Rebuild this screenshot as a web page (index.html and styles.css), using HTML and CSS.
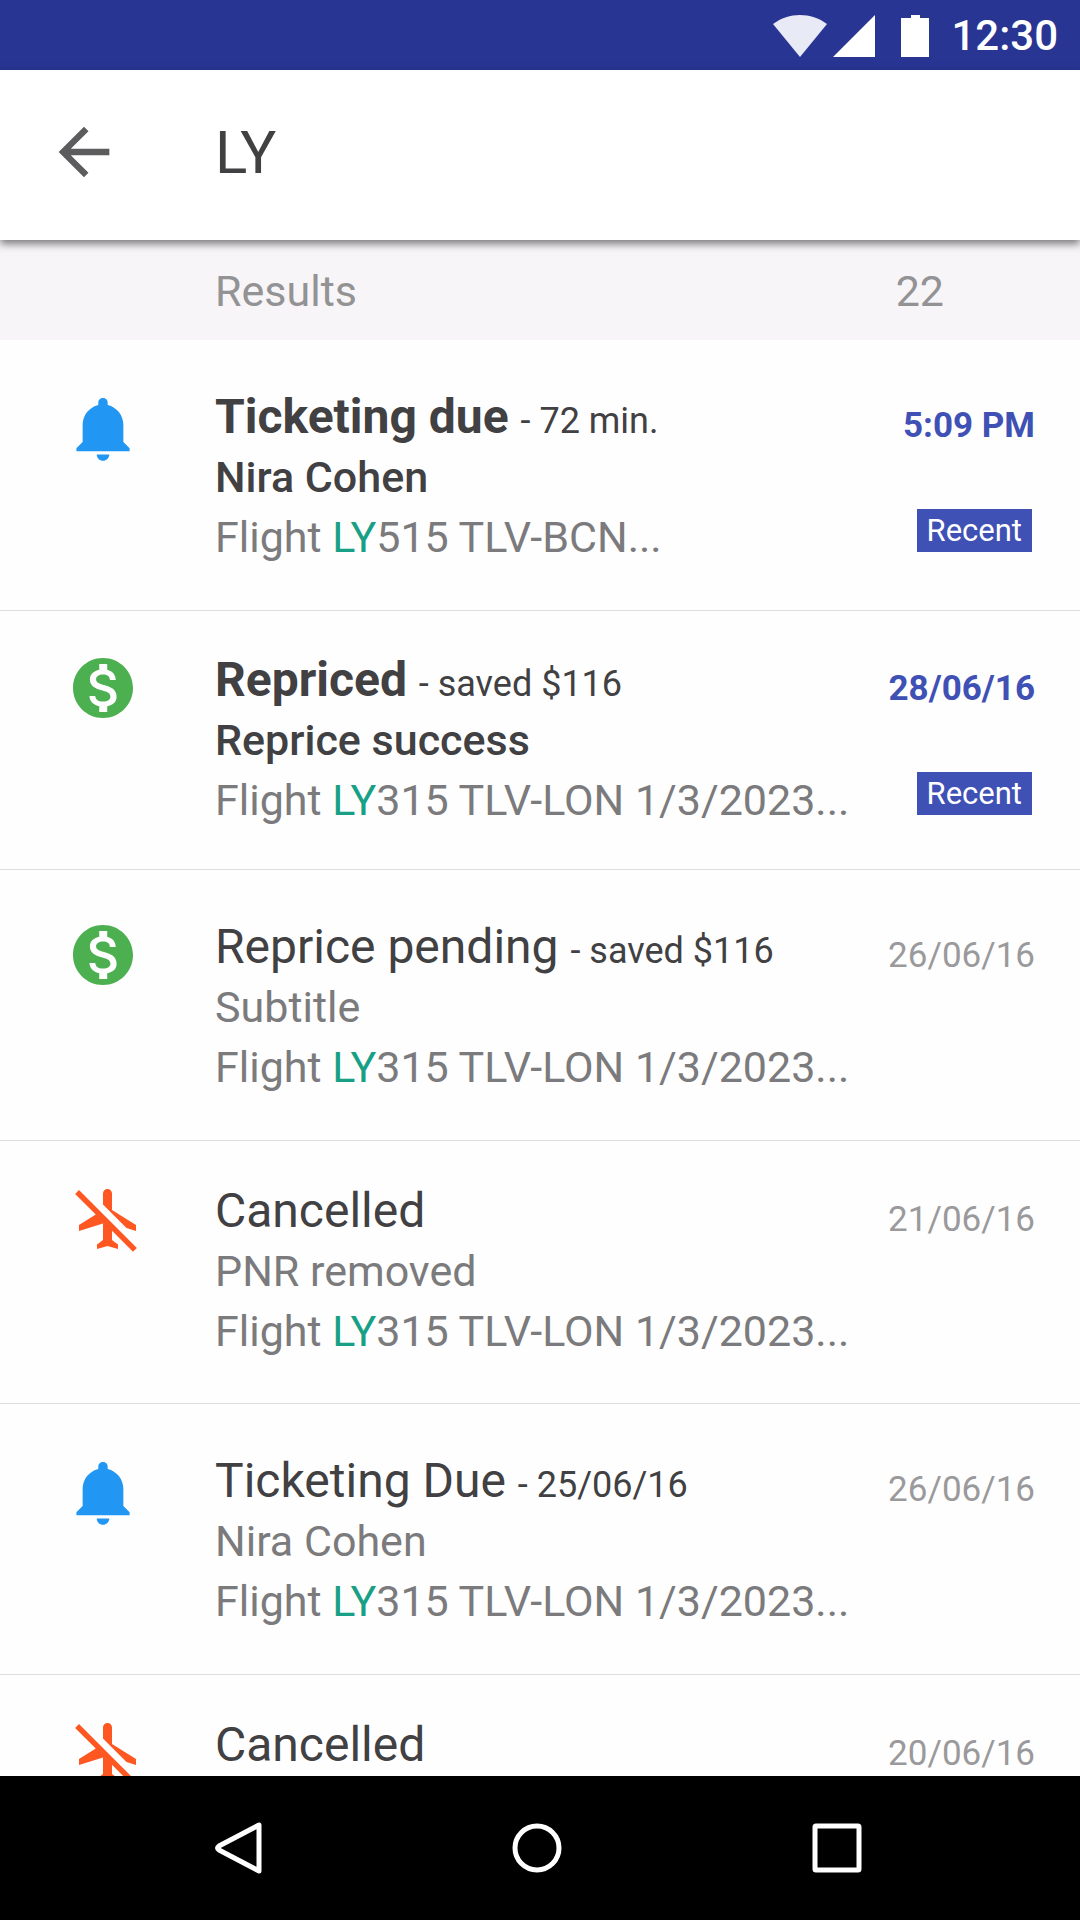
FILE: index.html
```
<!DOCTYPE html>
<html lang="en">
<head>
  <meta charset="UTF-8" />
  <meta name="viewport" content="width=device-width, initial-scale=1.0"/>
  <title>Search results</title>
  <link rel="stylesheet" href="styles.css">
</head>
<body>

  <!-- Icon shapes shared by the rows -->
  <svg class="sprite" aria-hidden="true">
    <symbol id="bell" viewBox="0 -0.9 23 23">
      <path d="M11.5 22c1.1 0 2-.9 2-2h-4c0 1.1.9 2 2 2zm6.500-6v-5.500c0-3.070-2.130-5.640-5-6.320V3.500c0-.83-.67-1.500-1.500-1.500S10 2.670 10 3.500v.68c-2.870.68-5 3.250-5 6.320V16l-2 2v1h17v-1l-2-2z"/>
    </symbol>
    <symbol id="dollar" viewBox="0 0 24 24">
      <path d="M12 2C6.480 2 2 6.480 2 12s4.480 10 10 10 10-4.480 10-10S17.520 2 12 2zm1.410 16.090V20h-2.670v-1.930c-1.710-.36-3.160-1.460-3.270-3.400h1.960c.1 1.050.82 1.870 2.650 1.870 1.960 0 2.400-.98 2.400-1.590 0-.83-.44-1.610-2.670-2.140-2.480-.6-4.180-1.620-4.180-3.670 0-1.720 1.390-2.840 3.110-3.210V4h2.670v1.950c1.860.45 2.790 1.860 2.850 3.390H14.300c-.05-1.110-.64-1.870-2.220-1.870-1.500 0-2.400.68-2.400 1.640 0 .84.65 1.390 2.670 1.910s4.180 1.390 4.180 3.910c-.01 1.830-1.380 2.830-3.120 3.160z"/>
    </symbol>
    <symbol id="plane-off" viewBox="-2 0 24 24">
      <path d="M13 9V3.500c0-.83-.67-1.500-1.500-1.500S10 2.670 10 3.500v3.680l7.830 7.830L21 16v-2l-8-5z"/>
      <path d="M.7 3.650L7.580 10.530 2 14v2l8-2.500V19l-2 1.500V22l3.500-1 3.500 1v-1.500L13 19v-3.050l7 7 1.300-1.300L2 2.350z"/>
    </symbol>
  </svg>

  <!-- Status bar -->
  <div class="status-bar">
    <svg class="wifi" viewBox="0 0 54 42"><path d="M0 9C16-3 38-3 54 9L27 42z"/></svg>
    <svg class="signal" viewBox="0 0 42 42"><path d="M42 0v42H0z"/></svg>
    <svg class="battery" viewBox="0 0 28 42"><path d="M10 0h9v3h9v39H0V3h10z"/></svg>
    <span class="time">12:30</span>
  </div>

  <!-- Search -->
  <header class="search-bar">
    <button class="back" aria-label="Back">
      <svg viewBox="0 0 24 24"><path d="M20 11H7.830l5.590-5.590L12 4l-8 8 8 8 1.410-1.410L7.830 13H20v-2z"/></svg>
    </button>
    <input class="search" type="text" value="LY" aria-label="Search">
  </header>

  <div class="results-head">
    <span>Results</span>
    <span>22</span>
  </div>

  <!-- Results -->
  <main class="results">
    <article class="row unread">
      <svg class="icon blue"><use href="#bell"/></svg>
      <div class="text">
        <h2>Ticketing due <small>- 72 min.</small></h2>
        <p class="subtitle">Nira Cohen</p>
        <p>Flight <mark>LY</mark>515 TLV-BCN...</p>
      </div>
      <div class="meta">
        <time>5:09 PM</time>
        <span class="badge">Recent</span>
      </div>
    </article>

    <article class="row unread compact">
      <svg class="icon green"><use href="#dollar"/></svg>
      <div class="text">
        <h2>Repriced <small>- saved $116</small></h2>
        <p class="subtitle">Reprice success</p>
        <p>Flight <mark>LY</mark>315 TLV-LON 1/3/2023...</p>
      </div>
      <div class="meta">
        <time>28/06/16</time>
        <span class="badge">Recent</span>
      </div>
    </article>

    <article class="row">
      <svg class="icon green"><use href="#dollar"/></svg>
      <div class="text">
        <h2>Reprice pending <small>- saved $116</small></h2>
        <p class="subtitle">Subtitle</p>
        <p>Flight <mark>LY</mark>315 TLV-LON 1/3/2023...</p>
      </div>
      <div class="meta">
        <time>26/06/16</time>
      </div>
    </article>

    <article class="row cancelled">
      <svg class="icon orange"><use href="#plane-off"/></svg>
      <div class="text">
        <h2>Cancelled</h2>
        <p class="subtitle">PNR removed</p>
        <p>Flight <mark>LY</mark>315 TLV-LON 1/3/2023...</p>
      </div>
      <div class="meta">
        <time>21/06/16</time>
      </div>
    </article>

    <article class="row">
      <svg class="icon blue"><use href="#bell"/></svg>
      <div class="text">
        <h2>Ticketing Due <small>- 25/06/16</small></h2>
        <p class="subtitle">Nira Cohen</p>
        <p>Flight <mark>LY</mark>315 TLV-LON 1/3/2023...</p>
      </div>
      <div class="meta">
        <time>26/06/16</time>
      </div>
    </article>

    <article class="row cancelled">
      <svg class="icon orange"><use href="#plane-off"/></svg>
      <div class="text">
        <h2>Cancelled</h2>
      </div>
      <div class="meta">
        <time>20/06/16</time>
      </div>
    </article>
  </main>

  <!-- Navigation bar -->
  <nav class="nav-bar">
    <button aria-label="Back"><svg viewBox="0 0 56 56"><path d="M50 5v46L10 30q-3-2 0-4z"/></svg></button>
    <button aria-label="Home"><svg viewBox="0 0 56 56"><circle cx="28" cy="28" r="22"/></svg></button>
    <button aria-label="Recent apps"><svg viewBox="0 0 56 56"><rect x="6" y="6" width="44" height="44" rx="1"/></svg></button>
  </nav>

</body>
</html>
```
FILE: styles.css
```
* {
  box-sizing: border-box;
}

body {
  margin: 0;
  height: 100vh;
  display: flex;
  flex-direction: column;
  overflow: hidden;
  font-family: Roboto, "Liberation Sans", sans-serif;
  font-size: 43px;
  line-height: 60px;
  color: #414042;
  background: #fefefe;
}

h2,
p {
  margin: 0;
  white-space: nowrap;
}

button {
  padding: 0;
  border: none;
  background: none;
  cursor: pointer;
}

.sprite {
  position: absolute;
  width: 0;
  height: 0;
}

/* Status bar */
.status-bar {
  flex: none;
  height: 70px;
  padding: 2px 22px 0 0;
  display: flex;
  justify-content: flex-end;
  align-items: center;
  background: #283593;
  color: #fff;
}

.status-bar svg {
  height: 42px;
  fill: #fff;
}

.status-bar .wifi {
  width: 54px;
  margin-right: 6px;
  fill: #e8eaf6;
}

.signal {
  width: 42px;
  margin-right: 26px;
}

.battery {
  width: 28px;
  margin-right: 22px;
}

.time {
  font-size: 42px;
  font-weight: 500;
}

/* Search */
.search-bar {
  flex: none;
  position: relative;
  height: 170px;
  padding: 0 46px 6px;
  display: flex;
  align-items: center;
  background: #fff;
  box-shadow: 0 4px 8px rgba(0, 0, 0, 0.5);
}

.back {
  width: 76px;
  height: 76px;
  margin-right: 93px;
}

.back svg {
  display: block;
  fill: #5c5b5d;
}

.search {
  flex: 1;
  min-width: 0;
  padding: 0;
  border: none;
  outline: none;
  background: none;
  font-family: inherit;
  font-size: 60px;
  color: #414042;
}

.results-head {
  flex: none;
  height: 100px;
  padding: 2px 136px 0 215px;
  display: flex;
  justify-content: space-between;
  align-items: center;
  background: #f7f5f7;
  color: #939294;
}

/* Results */
.results {
  flex: 1;
  min-height: 0;
  overflow: hidden;
}

.row {
  display: flex;
  padding: 47px 45px 43px 67px;
  border-bottom: 1px solid #dddcde;
}

.row.compact {
  padding-top: 39px;
  padding-bottom: 39px;
}

.row.cancelled {
  padding-top: 40px;
  padding-bottom: 42px;
}

.icon {
  flex: none;
  width: 72px;
  height: 72px;
  margin: 2px 76px 0 0;
}

.blue {
  fill: #2196f3;
}

.green {
  fill: #4caf50;
}

.orange {
  fill: #ff5722;
}

.text {
  flex: 1;
  min-width: 0;
  color: #7b7a7c;
}

h2 {
  font-size: 48px;
  font-weight: 400;
  line-height: 60px;
  color: #414042;
}

small {
  font-size: 36px;
  font-weight: 400;
  line-height: 36px;
}

mark {
  background: none;
  color: #17a085;
}

.unread h2 {
  font-weight: 700;
}

.unread .subtitle {
  font-weight: 500;
  color: #414042;
}

.meta {
  flex: none;
  display: flex;
  flex-direction: column;
  align-items: flex-end;
  padding-top: 9px;
}

time {
  font-size: 35px;
  color: #9a999b;
}

.unread time {
  font-weight: 700;
  color: #3f51b5;
}

.badge {
  margin: 53px 3px 0 0;
  padding: 0 10px;
  font-size: 31px;
  line-height: 43px;
  background: #3f51b5;
  color: #fff;
}

/* Navigation bar */
.nav-bar {
  flex: none;
  height: 144px;
  padding: 0 93px 0 87px;
  display: grid;
  grid-template-columns: repeat(3, 1fr);
  align-items: center;
  background: #000;
}

.nav-bar svg {
  display: block;
  width: 56px;
  height: 56px;
  margin: auto;
  fill: none;
  stroke: #fff;
  stroke-width: 5;
  stroke-linejoin: round;
}
```
